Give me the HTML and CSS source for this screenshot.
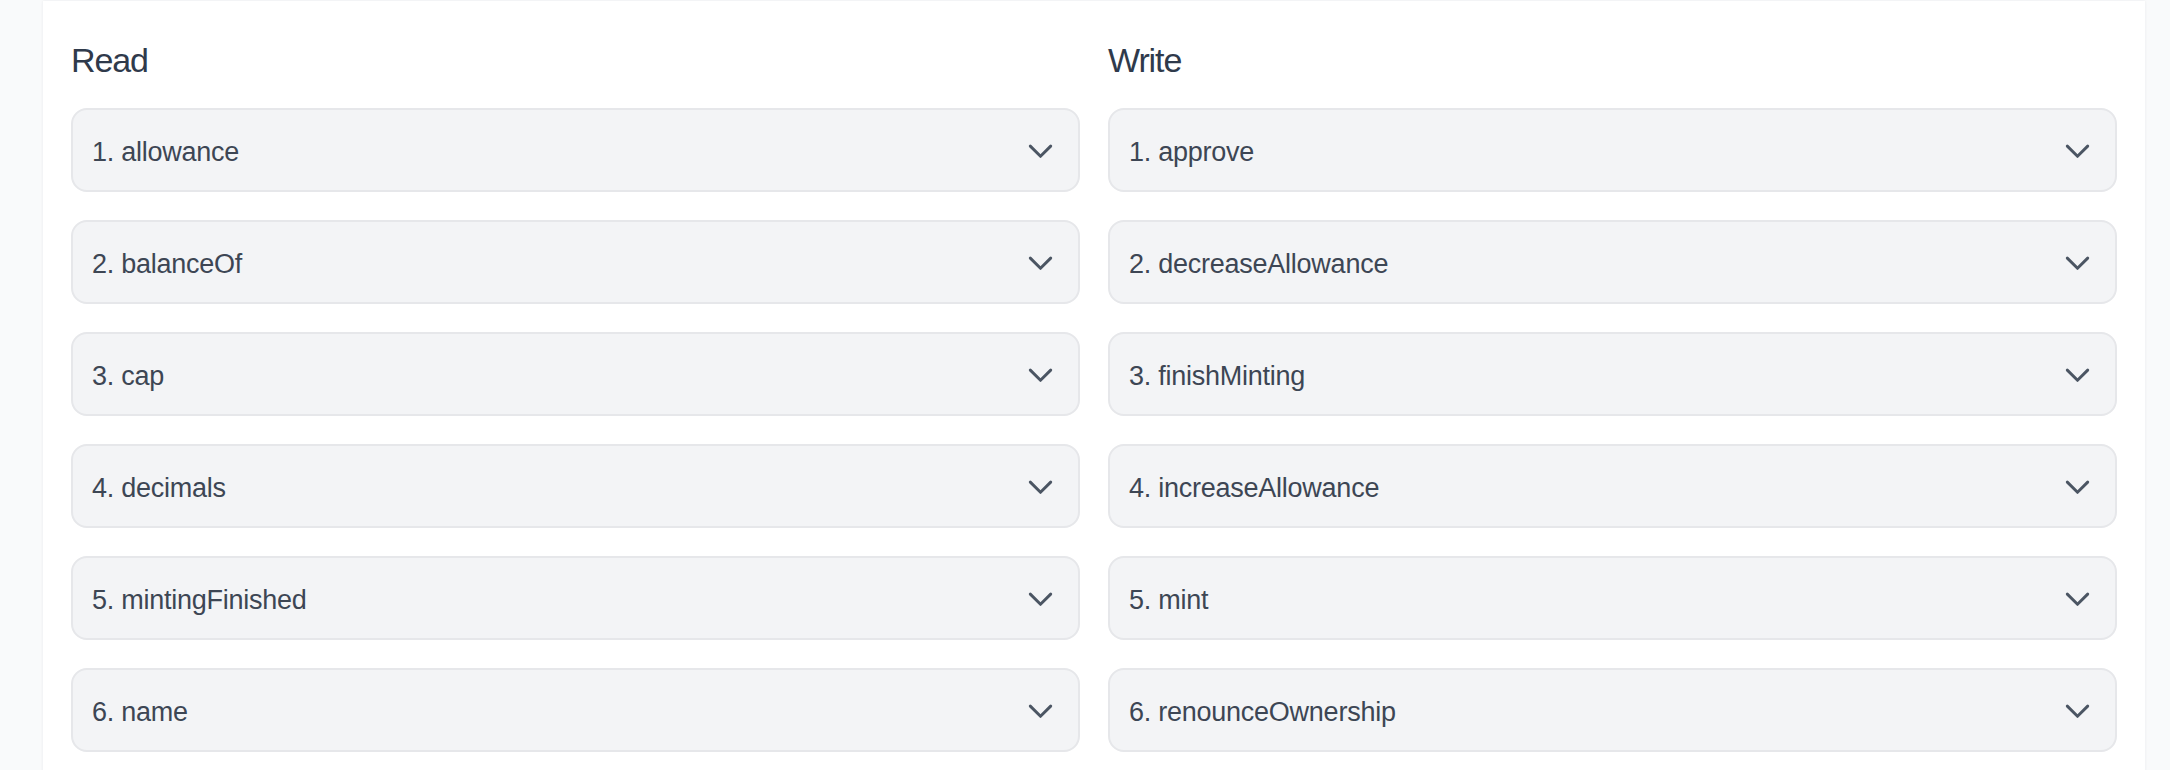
FILE: index.html
```html
<!DOCTYPE html>
<html lang="en">
<head>
<meta charset="utf-8">
<title>Contract</title>
<link rel="stylesheet" href="styles.css">
</head>
<body>
<div class="page">
  <section class="card">
    <div class="column">
      <h2 class="column-title">Read</h2>
      <ul class="fn-list">
        <li class="fn-item"><span class="fn-name">1. allowance</span><svg class="chev" viewBox="0 0 24 24"><path d="M19 9l-7 7-7-7"/></svg></li>
        <li class="fn-item"><span class="fn-name">2. balanceOf</span><svg class="chev" viewBox="0 0 24 24"><path d="M19 9l-7 7-7-7"/></svg></li>
        <li class="fn-item"><span class="fn-name">3. cap</span><svg class="chev" viewBox="0 0 24 24"><path d="M19 9l-7 7-7-7"/></svg></li>
        <li class="fn-item"><span class="fn-name">4. decimals</span><svg class="chev" viewBox="0 0 24 24"><path d="M19 9l-7 7-7-7"/></svg></li>
        <li class="fn-item"><span class="fn-name">5. mintingFinished</span><svg class="chev" viewBox="0 0 24 24"><path d="M19 9l-7 7-7-7"/></svg></li>
        <li class="fn-item"><span class="fn-name">6. name</span><svg class="chev" viewBox="0 0 24 24"><path d="M19 9l-7 7-7-7"/></svg></li>
      </ul>
    </div>
    <div class="column">
      <h2 class="column-title">Write</h2>
      <ul class="fn-list">
        <li class="fn-item"><span class="fn-name">1. approve</span><svg class="chev" viewBox="0 0 24 24"><path d="M19 9l-7 7-7-7"/></svg></li>
        <li class="fn-item"><span class="fn-name">2. decreaseAllowance</span><svg class="chev" viewBox="0 0 24 24"><path d="M19 9l-7 7-7-7"/></svg></li>
        <li class="fn-item"><span class="fn-name">3. finishMinting</span><svg class="chev" viewBox="0 0 24 24"><path d="M19 9l-7 7-7-7"/></svg></li>
        <li class="fn-item"><span class="fn-name">4. increaseAllowance</span><svg class="chev" viewBox="0 0 24 24"><path d="M19 9l-7 7-7-7"/></svg></li>
        <li class="fn-item"><span class="fn-name">5. mint</span><svg class="chev" viewBox="0 0 24 24"><path d="M19 9l-7 7-7-7"/></svg></li>
        <li class="fn-item"><span class="fn-name">6. renounceOwnership</span><svg class="chev" viewBox="0 0 24 24"><path d="M19 9l-7 7-7-7"/></svg></li>
      </ul>
    </div>
  </section>
</div>
</body>
</html>
```

FILE: styles.css
```css
html, body {
  margin: 0;
  padding: 0;
  background: #f9fafb;
  height: 100%;
  overflow: hidden;
}

body {
  font-family: "Liberation Sans", Arial, sans-serif;
  color: #374151;
}

.page {
  padding: 1px 25px 0 43px;
}

.card {
  background: #ffffff;
  box-shadow: 0 0 3px rgba(17, 24, 39, 0.07);
  padding: 39px 28px 40px 28px;
  display: grid;
  grid-template-columns: 1fr 1fr;
  column-gap: 28px;
}

.column {
  display: flex;
  flex-direction: column;
}

.column-title {
  margin: 0 0 28px 0;
  font-size: 34px;
  line-height: 40px;
  font-weight: 400;
  letter-spacing: -1.1px;
  color: #2f3a4b;
}

.fn-list {
  list-style: none;
  margin: 0;
  padding: 0;
  display: flex;
  flex-direction: column;
  gap: 28px;
}

.fn-item {
  box-sizing: border-box;
  height: 84px;
  display: flex;
  align-items: center;
  justify-content: space-between;
  padding: 0 19px 0 19px;
  background: #f3f4f6;
  border: 2px solid #e6e7ea;
  border-radius: 16px;
}

.fn-name {
  margin-top: 4px;
  font-size: 27px;
  letter-spacing: -0.25px;
  color: #3d4654;
}

.chev {
  width: 35px;
  height: 35px;
  margin-right: 1px;
  margin-top: 1px;
  fill: none;
  stroke: #4b5563;
  stroke-width: 2;
  stroke-linecap: round;
  stroke-linejoin: round;
  flex-shrink: 0;
}
```
